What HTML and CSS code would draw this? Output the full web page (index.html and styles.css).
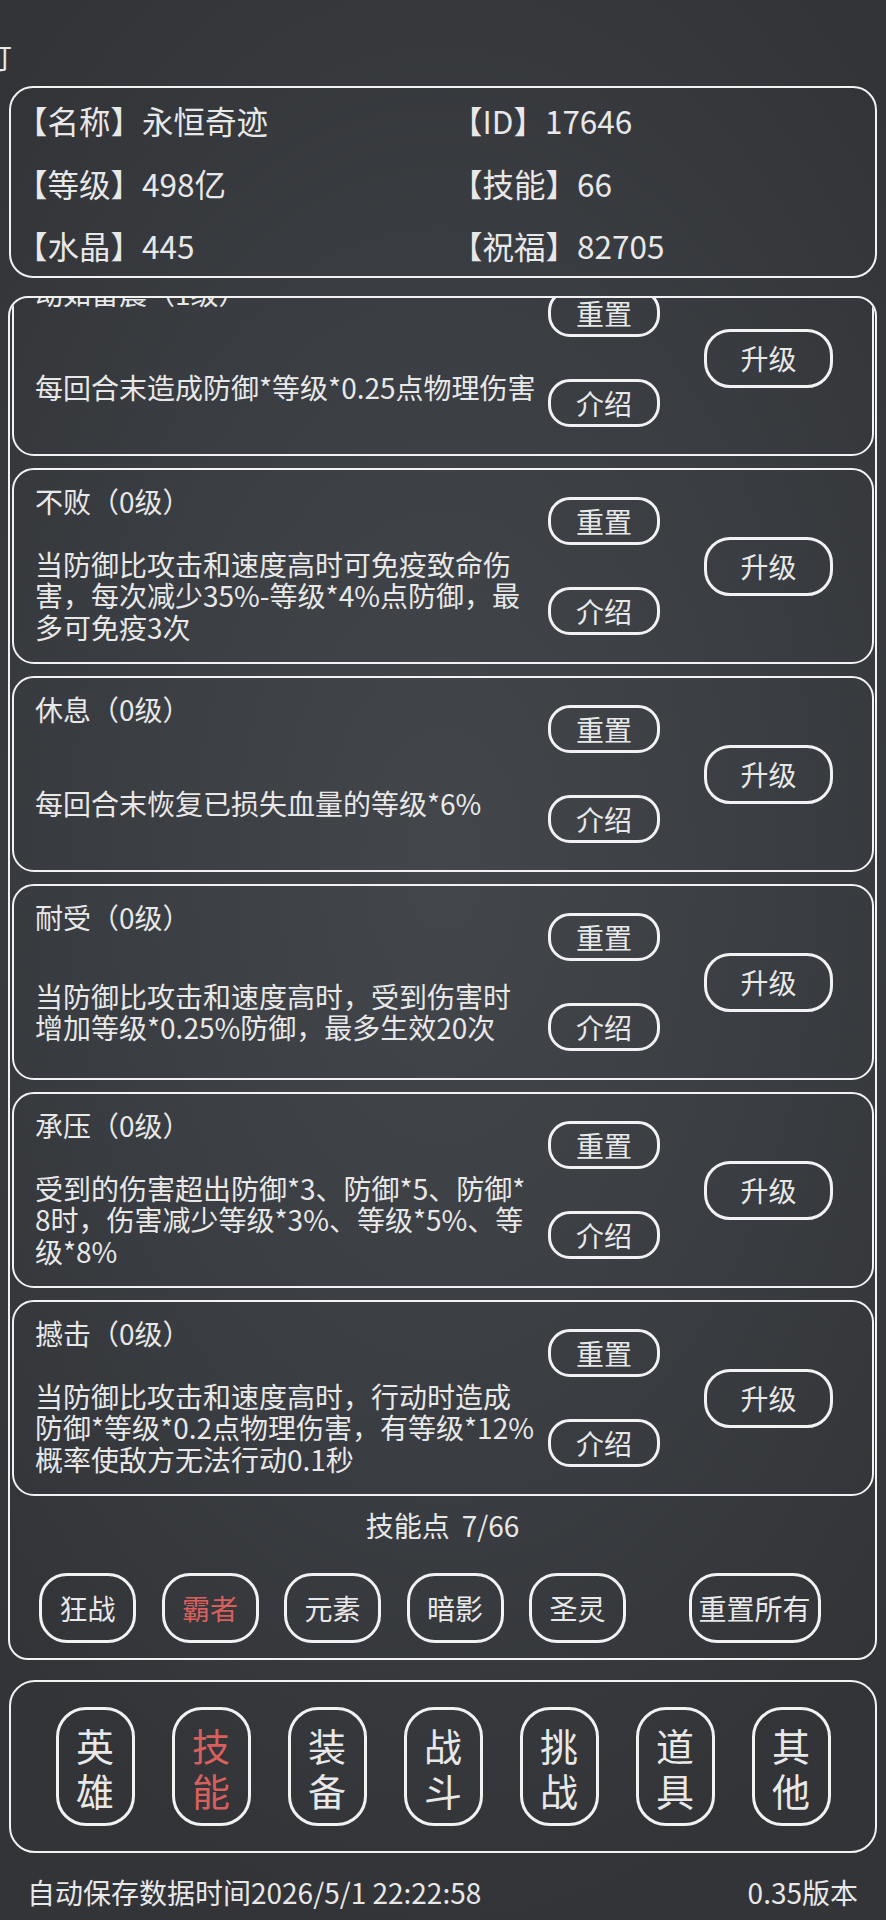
FILE: index.html
```html
<!DOCTYPE html>
<html lang="zh-CN">
<head>
  <meta charset="UTF-8" />
  <meta name="viewport" content="width=device-width, initial-scale=1.0" />
  <title>技能</title>
  <link rel="stylesheet" href="styles.css">
</head>
<body>
  <div class="topline"><span class="cut">订</span></div>

  <div class="info">
    <div>【名称】永恒奇迹</div>
    <div>【ID】17646</div>
    <div>【等级】498亿</div>
    <div>【技能】66</div>
    <div>【水晶】445</div>
    <div>【祝福】82705</div>
  </div>

  <div class="panel">
    <div class="skills">
      <div class="skill-list">
        <div class="skill">
          <div class="skill-text">
            <div class="skill-name">动如雷震（1级）</div>
            <div class="skill-desc"><p>每回合末造成防御*等级*0.25点物理伤害</p></div>
          </div>
          <div class="skill-btns">
            <button class="btn small">重置</button>
            <button class="btn small">介绍</button>
          </div>
          <button class="btn up">升级</button>
        </div>

        <div class="skill">
          <div class="skill-text">
            <div class="skill-name">不败（0级）</div>
            <div class="skill-desc"><p>当防御比攻击和速度高时可免疫致命伤害，每次减少35%-等级*4%点防御，最多可免疫3次</p></div>
          </div>
          <div class="skill-btns">
            <button class="btn small">重置</button>
            <button class="btn small">介绍</button>
          </div>
          <button class="btn up">升级</button>
        </div>

        <div class="skill">
          <div class="skill-text">
            <div class="skill-name">休息（0级）</div>
            <div class="skill-desc"><p>每回合末恢复已损失血量的等级*6%</p></div>
          </div>
          <div class="skill-btns">
            <button class="btn small">重置</button>
            <button class="btn small">介绍</button>
          </div>
          <button class="btn up">升级</button>
        </div>

        <div class="skill">
          <div class="skill-text">
            <div class="skill-name">耐受（0级）</div>
            <div class="skill-desc"><p>当防御比攻击和速度高时，受到伤害时增加等级*0.25%防御，最多生效20次</p></div>
          </div>
          <div class="skill-btns">
            <button class="btn small">重置</button>
            <button class="btn small">介绍</button>
          </div>
          <button class="btn up">升级</button>
        </div>

        <div class="skill">
          <div class="skill-text">
            <div class="skill-name">承压（0级）</div>
            <div class="skill-desc"><p>受到的伤害超出防御*3、防御*5、防御*<wbr>8时，伤害减少等级*3%、等级*5%、等级*8%</p></div>
          </div>
          <div class="skill-btns">
            <button class="btn small">重置</button>
            <button class="btn small">介绍</button>
          </div>
          <button class="btn up">升级</button>
        </div>

        <div class="skill">
          <div class="skill-text">
            <div class="skill-name">撼击（0级）</div>
            <div class="skill-desc"><p>当防御比攻击和速度高时，行动时造成防御*等级*0.2点物理伤害，有等级*12%概率使敌方无法行动0.1秒</p></div>
          </div>
          <div class="skill-btns">
            <button class="btn small">重置</button>
            <button class="btn small">介绍</button>
          </div>
          <button class="btn up">升级</button>
        </div>
      </div>
    </div>

    <div class="points">技能点<span class="num">7/66</span></div>

    <div class="schools">
      <button class="btn school">狂战</button>
      <button class="btn school active">霸者</button>
      <button class="btn school">元素</button>
      <button class="btn school">暗影</button>
      <button class="btn school">圣灵</button>
      <button class="btn school reset-all">重置所有</button>
    </div>
  </div>

  <nav class="tabs">
    <button class="btn tab">英<br>雄</button>
    <button class="btn tab active">技<br>能</button>
    <button class="btn tab">装<br>备</button>
    <button class="btn tab">战<br>斗</button>
    <button class="btn tab">挑<br>战</button>
    <button class="btn tab">道<br>具</button>
    <button class="btn tab">其<br>他</button>
  </nav>

  <footer class="footer">
    <span>自动保存数据时间2026/5/1 22:22:58</span>
    <span>0.35版本</span>
  </footer>
</body>
</html>
```

FILE: styles.css
```css
:root {
  font-family: "Noto Sans CJK SC", "Noto Sans", sans-serif;
  --text: #e8e8e8;
  --line: #f2f2f2;
  --red: #d95f5c;
}
* {
  box-sizing: border-box;
}
body {
  margin: 0;
  width: 886px;
  min-height: 1920px;
  color: var(--text);
  background: radial-gradient(ellipse 70% 55% at 50% 45%, #43464b 0%, #393c40 60%, #323438 100%);
  overflow: hidden;
}
p {
  margin: 0;
}

/* === Top === */
.topline {
  height: 86px;
  padding-top: 39px;
  font-size: 28px;
  line-height: 36px;
  overflow: hidden;
}
.cut {
  display: inline-block;
  margin-left: -16px;
}

.info {
  margin: 0 9px;
  height: 192px;
  border: 2px solid var(--line);
  border-radius: 24px;
  padding: 1px 0 1px 5px;
  display: grid;
  grid-template-columns: 435px 1fr;
  grid-auto-rows: 62.6px;
  align-items: center;
  font-size: 31.5px;
  line-height: 40px;
}

/* === Skill panel === */
.panel {
  margin: 18px 9px 0 8px;
  height: 1364px;
  border: 2px solid var(--line);
  border-radius: 20px;
  padding-bottom: 15px;
}
.skills {
  height: 1200px;
  overflow: hidden;
  border-radius: 18px 18px 0 0;
}
.skill-list {
  margin-top: -38px;
  display: flex;
  flex-direction: column;
  gap: 12px;
  padding: 0 1px 0 2px;
}
.skill {
  height: 196px;
  border: 2px solid var(--line);
  border-radius: 22px;
  padding-left: 21px;
  display: flex;
  align-items: center;
}
.skill-text {
  align-self: stretch;
  flex: 0 0 503px;
  padding: 13px 0 2px;
  font-size: 28px;
}
.skill-name {
  height: 36px;
  line-height: 36px;
  white-space: nowrap;
}
.skill-desc {
  margin-top: 13px;
  height: 128px;
  display: flex;
  align-items: center;
  line-height: 31.5px;
}
.skill-btns {
  margin-left: 10px;
  display: flex;
  flex-direction: column;
  gap: 42px;
}

/* === Buttons === */
.btn {
  font-family: inherit;
  color: var(--text);
  background: transparent;
  border: 3px solid var(--line);
  padding: 0;
  cursor: pointer;
  font-size: 28px;
}
.btn.active {
  color: var(--red);
}
.small {
  width: 112px;
  height: 48px;
  border-radius: 22px;
}
.up {
  margin-left: 44px;
  width: 129px;
  height: 59px;
  border-radius: 26px;
}

.points {
  margin-top: 9px;
  height: 36px;
  line-height: 36px;
  text-align: center;
  font-size: 28px;
}
.points .num {
  margin-left: 12px;
}
.schools {
  margin-top: 30px;
  padding-left: 29px;
  display: flex;
  gap: 25.5px;
}
.school {
  width: 97px;
  height: 70px;
  border-radius: 28px;
}
.school.reset-all {
  width: 132px;
  margin-left: 37px;
}

/* === Bottom nav === */
.tabs {
  margin: 20px 9px 0;
  height: 173px;
  border: 2px solid var(--line);
  border-radius: 26px;
  display: flex;
  align-items: center;
  justify-content: center;
  gap: 37px;
}
.tab {
  width: 79px;
  height: 119px;
  border-radius: 30px;
  font-size: 38px;
  line-height: 45px;
}

.footer {
  margin-top: 21px;
  padding: 0 28px 0 27px;
  display: flex;
  justify-content: space-between;
  font-size: 28px;
  line-height: 36px;
}
```
